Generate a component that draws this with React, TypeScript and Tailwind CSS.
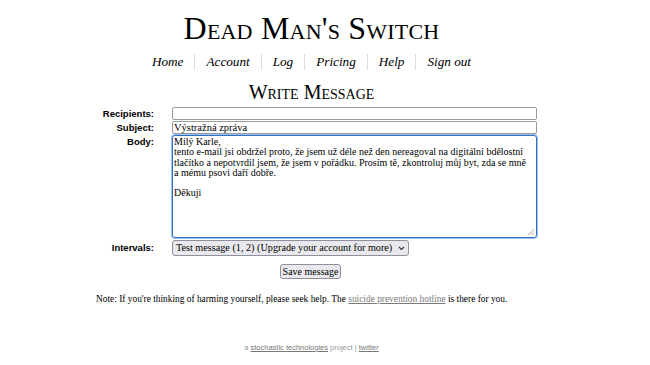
import type { FC } from 'react';

const navItems = ['Home', 'Account', 'Log', 'Pricing', 'Help', 'Sign out'];

const App: FC = () => {
    return <div className="w-[650px] h-[365px] bg-white text-black font-['Liberation_Serif',serif] overflow-hidden">
        <div className="ml-[86px] w-[451px] flex flex-col items-center">

            {/* site title */}
            <h1 className="mt-[10px] text-[32px] leading-[36px] [font-variant:small-caps] tracking-[0.2px]">
                Dead Man's Switch
            </h1>

            {/* nav with thin separators */}
            <nav className="mt-[8px] flex items-center italic text-[13.2px] leading-[16px]">
                {navItems.map((item, i) => (
                    <div key={item} className="flex items-center">
                        {i > 0 && <span className="w-px h-[16px] bg-[#dcdcdc]" />}
                        <a className={i === 0 ? 'pr-[11px]' : i === navItems.length - 1 ? 'pl-[11px]' : 'px-[11px]'}>{item}</a>
                    </div>
                ))}
            </nav>

            <h2 className="mt-[11px] text-[20px] leading-[22px] [font-variant:small-caps]">Write Message</h2>

            {/* form */}
            <div className="mt-[4px] w-full grid grid-cols-[68px_1fr] gap-x-[18px] gap-y-[1px] text-[10px]">
                <label className="text-right font-bold font-['Liberation_Sans',sans-serif] text-[9.5px] leading-[13px]">Recipients:</label>
                <div className="h-[13px] border border-[#9a9a9a] rounded-[2px]" />

                <label className="text-right font-bold font-['Liberation_Sans',sans-serif] text-[9.5px] leading-[13px]">Subject:</label>
                <div className="h-[13px] border border-[#9a9a9a] rounded-[2px] px-[1px] leading-[11px] text-[10.5px]">Výstražná zpráva</div>

                <label className="text-right font-bold font-['Liberation_Sans',sans-serif] text-[9.5px] leading-[13px]">Body:</label>
                <div className="relative h-[103px] border border-[#2f6fc4] shadow-[0_0_0_1px_#9cc0ee] rounded-[3px] px-[1px] pt-[1px] text-[10px] leading-[10.4px]">
                    <p>Milý Karle,</p>
                    <p>tento e-mail jsi obdržel proto, že jsem už déle než den nereagoval na digitální bdělostní</p>
                    <p>tlačítko a nepotvrdil jsem, že jsem v pořádku. Prosím tě, zkontroluj můj byt, zda se mně</p>
                    <p>a mému psovi daří dobře.</p>
                    <p className="mt-[9px]">Děkuji</p>
                    {/* resize grip */}
                    <svg className="absolute right-[1px] bottom-[1px]" width="8" height="8" viewBox="0 0 8 8">
                        <path d="M7 1 L1 7 M7 3.5 L3.5 7 M7 6 L6 7" stroke="#9a9a9a" strokeWidth="0.8" />
                    </svg>
                </div>

                <label className="text-right font-bold font-['Liberation_Sans',sans-serif] text-[9.5px] leading-[16px] mt-[1px]">Intervals:</label>
                <div className="mt-[1px]">
                    <div className="inline-flex items-center h-[16px] px-[3px] bg-[#e9e9ed] border border-[#8f8f9d] rounded-[3px] text-[10.2px] leading-[14px]">
                        <span>Test message (1, 2) (Upgrade your account for more)</span>
                        <svg className="ml-[6px]" width="7" height="5" viewBox="0 0 7 5">
                            <path d="M1 1 L3.5 3.5 L6 1" stroke="#333" strokeWidth="1.1" fill="none" />
                        </svg>
                    </div>
                </div>
            </div>

            <button className="mt-[8px] ml-[-2px] h-[15px] px-[2px] bg-[#e9e9ed] border border-[#8f8f9d] rounded-[3px] text-[10px] leading-[13px]">
                Save message
            </button>

            {/* note */}
            <p className="self-start mt-[14px] ml-[10px] text-[9.4px] leading-[12px] whitespace-nowrap">
                Note: If you're thinking of harming yourself, please seek help. The <a className="text-[#7a7a7a] underline">suicide prevention hotline</a> is there for you.
            </p>

            {/* footer */}
            <div className="mt-[37px] font-['Liberation_Sans',sans-serif] text-[7.5px] text-[#999]">
                a <a className="underline text-[#777]">stochastic technologies</a> project | <a className="underline text-[#777]">twitter</a>
            </div>
        </div>
    </div>;
}

export default App;
